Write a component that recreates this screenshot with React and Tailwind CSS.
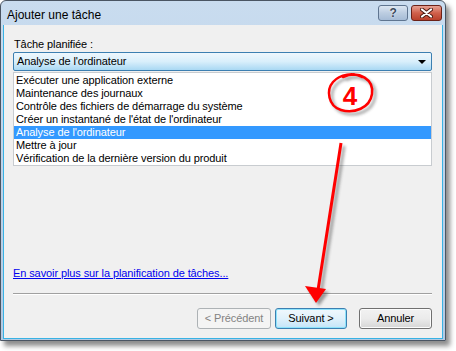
import React from "react";

const items = [
  "Exécuter une application externe",
  "Maintenance des journaux",
  "Contrôle des fichiers de démarrage du système",
  "Créer un instantané de l'état de l'ordinateur",
  "Analyse de l'ordinateur",
  "Mettre à jour",
  "Vérification de la dernière version du produit",
];

const circle =
  "M343 77 C360 70 374 80 372 94 C370 108 354 114 341 110 C328 106 326 90 333 82 C340 74 354 72 362 77";

const App = () => {
  return (
    <div
      className="relative w-[456px] h-[351px] bg-white overflow-hidden text-[11px] text-black tracking-[-0.1px]"
      style={{ fontFamily: '"Liberation Sans", Arial, sans-serif' }}
    >
      {/* Window */}
      <div className="w-[446px] h-[341px] flex flex-col border border-[#4a5563] rounded-t-[6px] bg-gradient-to-b from-[#c9dcef] to-[#b3cae3] shadow-[4px_5px_5px_rgba(0,0,0,0.45)]">
        {/* Title bar */}
        <div className="h-[24px] flex items-start justify-between pl-[6px] pr-[3px]">
          <span className="text-[12px] mt-[5px] text-black tracking-normal">Ajouter une tâche</span>
          <div className="flex gap-[3px] mt-[4px]">
            <div className="w-[30px] h-[16px] rounded-[3px] border border-[#5f7590] bg-gradient-to-b from-[#dbe6f2] via-[#bccde1] to-[#a6bcd6] flex items-center justify-center">
              <span className="text-[12px] font-bold text-[#3b4a5c] leading-none [text-shadow:0_0_2px_#fff]">?</span>
            </div>
            <div className="w-[31px] h-[16px] rounded-[3px] border border-[#6b2117] bg-gradient-to-b from-[#e5a193] via-[#d0604b] to-[#b9402b] flex items-center justify-center">
              <svg width="13" height="10" viewBox="0 0 13 10">
                <path d="M2 1.5 L11 8.5 M11 1.5 L2 8.5" stroke="#4a1a12" strokeWidth="4" strokeLinecap="round" />
                <path d="M2 1.5 L11 8.5 M11 1.5 L2 8.5" stroke="#fff" strokeWidth="2.2" strokeLinecap="round" />
              </svg>
            </div>
          </div>
        </div>

        {/* Client area */}
        <div className="flex-1 mx-[2px] mb-[1px] bg-[#f0f0f0] border border-t-0 border-[#38b2e4] flex flex-col pl-[9px] pr-[10px]">
          <div className="mt-[12px] h-[14px] leading-[14px] pl-[1px]">Tâche planifiée :</div>

          {/* Combo */}
          <div className="mt-[1px] h-[19px] rounded-[2px] border border-[#3c7fb1] bg-gradient-to-b from-[#eef7fd] via-[#d9effb] to-[#a9d8f3] flex items-center justify-between pl-[3px] pr-[5px]">
            <span>Analyse de l'ordinateur</span>
            <svg width="8" height="4" viewBox="0 0 8 4">
              <path d="M0 0 H8 L4 4 Z" fill="#000" />
            </svg>
          </div>

          {/* List */}
          <div className="mt-[1px] w-[419px] h-[94px] border border-[#c8ccd0] bg-white pt-[1px]">
            {items.map((item, i) => (
              <div
                key={i}
                className={`h-[13px] leading-[13px] pl-[2px] whitespace-nowrap ${
                  i === 4 ? "bg-[#3399ff] text-white" : ""
                }`}
              >
                {item}
              </div>
            ))}
          </div>

          <div className="mt-[101px] h-[13px] leading-[13px]">
            <span className="text-[#0000ee] underline">En savoir plus sur la planification de tâches...</span>
          </div>

          <div className="mt-[13px] h-[2px] border-t border-[#a0a0a0] border-b border-b-white" />

          {/* Buttons */}
          <div className="mt-[13px] flex justify-end items-center">
            <div className="w-[74px] h-[21px] rounded-[3px] border border-[#adb2b5] bg-[#f4f4f4] text-[#838383] flex items-center justify-center">
              &lt; Précédent
            </div>
            <div className="ml-[4px] w-[72px] h-[21px] rounded-[3px] border border-[#3c7fb1] bg-gradient-to-b from-[#f0f8fd] via-[#e0f1fb] to-[#c4e5f8] flex items-center justify-center shadow-[inset_0_0_0_1px_#8ee3fb]">
              Suivant &gt;
            </div>
            <div className="ml-[12px] w-[73px] h-[21px] rounded-[3px] border border-[#707070] bg-gradient-to-b from-[#f2f2f2] via-[#ebebeb] to-[#d6d6d6] flex items-center justify-center shadow-[inset_0_0_0_1px_#fcfcfc]">
              Annuler
            </div>
          </div>
        </div>
      </div>

      {/* Annotation overlay */}
      <svg className="absolute inset-0 pointer-events-none" width="456" height="351" viewBox="0 0 456 351">
        <defs>
          <filter id="sh" x="-20%" y="-20%" width="140%" height="140%">
            <feGaussianBlur stdDeviation="1.5" />
          </filter>
        </defs>
        <g opacity="0.45" transform="translate(3,3)" filter="url(#sh)">
          <path d={circle} stroke="#333" strokeWidth="2.5" fill="none" />
          <path d="M341 143 L318 290" stroke="#333" strokeWidth="3" fill="none" />
          <path d="M305 286 L316 303 L326 289 Z" fill="#333" />
        </g>
        <path d={circle} stroke="#ff0000" strokeWidth="2.5" fill="none" strokeLinecap="round" />
        <text x="350" y="105" textAnchor="middle" fontFamily="Liberation Sans, Arial, sans-serif" fontWeight="bold" fontSize="26" fill="#ff0000">
          4
        </text>
        <path d="M341 143 L318 290" stroke="#ff0000" strokeWidth="3" fill="none" />
        <path d="M305 286 L316 303 L326 289 Z" fill="#ff0000" />
      </svg>
    </div>
  );
};

export default App;
